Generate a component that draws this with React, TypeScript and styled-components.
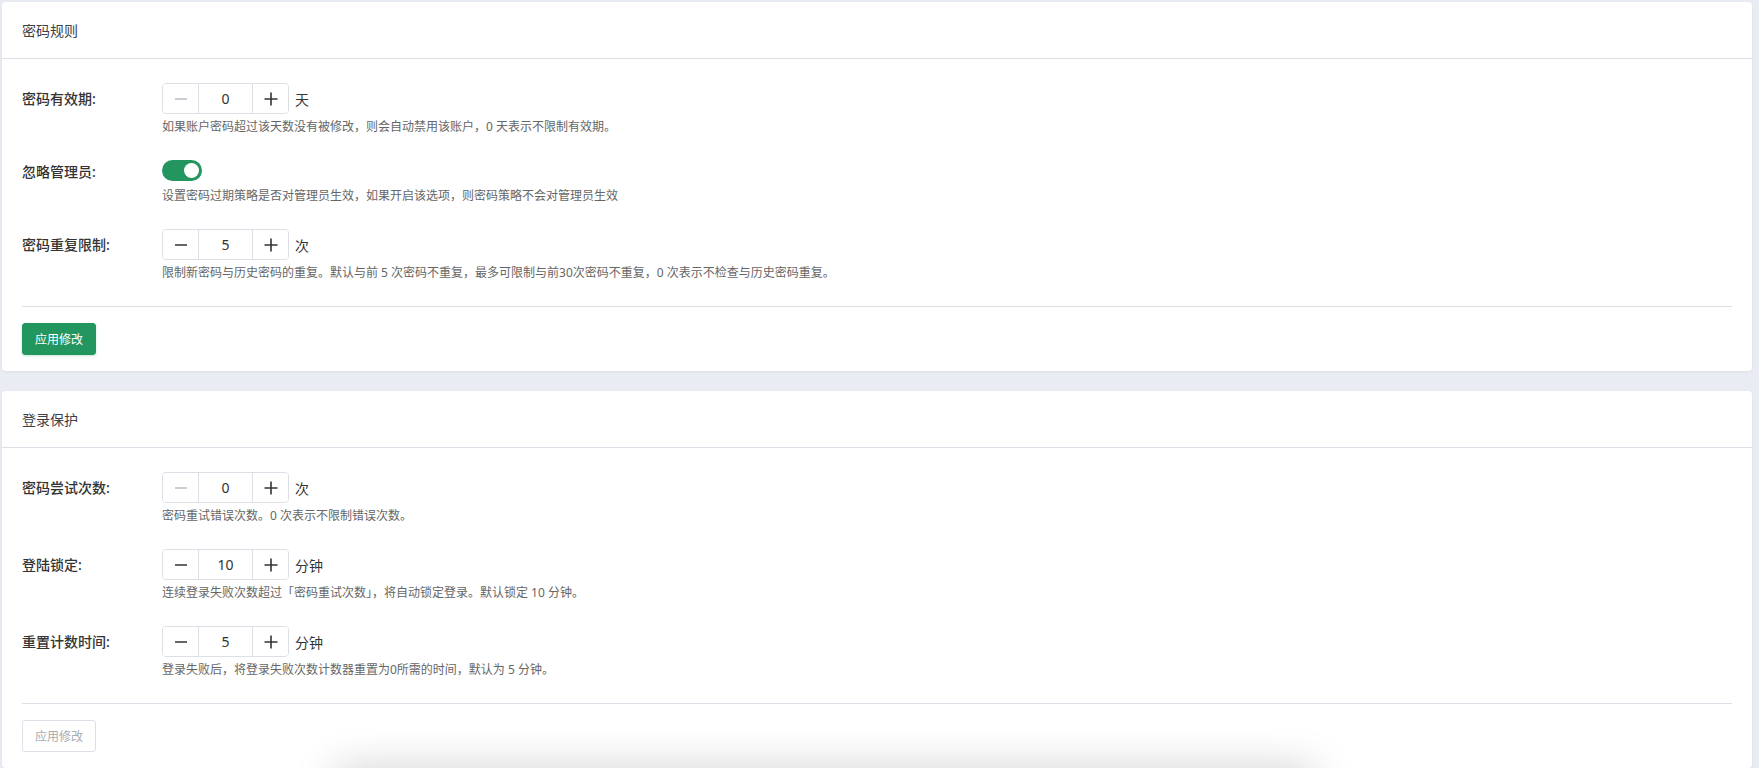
import React, { useState } from 'react';
import styled, { createGlobalStyle } from 'styled-components';

// === Global ===
const GlobalStyle = createGlobalStyle`
  html, body {
    margin: 0;
    padding: 0;
    background: #e9edf3;
    font-family: 'Noto Sans', 'Noto Sans CJK SC', sans-serif;
    color: #333;
  }
  * { box-sizing: border-box; }
`;

// === Styled Components ===
const Page = styled.div`
  display: flex;
  flex-direction: column;
  gap: 20px;
  padding: 2px 7px 0 2px;
  min-height: 768px;
  overflow: hidden;
`;

const Card = styled.section`
  background: #fff;
  border-radius: 4px;
  box-shadow: 0 1px 3px rgba(0, 0, 0, 0.06);
`;

const CardHeader = styled.div`
  height: 57px;
  display: flex;
  align-items: center;
  padding: 0 20px;
  border-bottom: 1px solid #dcdfe6;
  font-size: 14px;
  color: #3c4149;
`;

const CardBody = styled.div`
  padding: 24px 20px 16px 20px;
`;

const Row = styled.div`
  display: flex;
  margin-bottom: 24px;
`;

const Label = styled.div<{ $h: number }>`
  width: 140px;
  flex-shrink: 0;
  height: ${p => p.$h}px;
  line-height: ${p => p.$h}px;
  font-size: 14px;
  font-weight: 500;
  color: #333;
`;

const Control = styled.div`
  display: flex;
  flex-direction: column;
`;

const ControlLine = styled.div<{ $h: number }>`
  display: flex;
  align-items: ${p => (p.$h > 24 ? 'center' : 'flex-start')};
  height: ${p => p.$h}px;
  gap: 6px;
`;

const Help = styled.div`
  margin-top: 4px;
  font-size: 12px;
  line-height: 18px;
  color: #666;
`;

const Stepper = styled.div`
  display: flex;
  height: 31px;
  border: 1px solid #dcdfe6;
  border-radius: 4px;
  overflow: hidden;
`;

const StepButton = styled.button<{ $disabled?: boolean }>`
  width: 35px;
  height: 100%;
  display: flex;
  align-items: center;
  justify-content: center;
  background: #fff;
  border: none;
  padding: 0;
  color: ${p => (p.$disabled ? '#b8bcc4' : '#333')};
  cursor: ${p => (p.$disabled ? 'not-allowed' : 'pointer')};
`;

const StepInput = styled.input`
  width: 55px;
  height: 100%;
  border: none;
  border-left: 1px solid #dcdfe6;
  border-right: 1px solid #dcdfe6;
  text-align: center;
  font-size: 14px;
  font-family: 'Noto Sans', sans-serif;
  color: #333;
  outline: none;
  padding: 0;
`;

const Unit = styled.span`
  font-size: 14px;
  color: #333;
`;

const Toggle = styled.button<{ $on: boolean }>`
  position: relative;
  width: 40px;
  height: 21px;
  border-radius: 11px;
  border: none;
  padding: 0;
  background: ${p => (p.$on ? '#239660' : '#dcdfe6')};
  cursor: pointer;

  &::after {
    content: '';
    position: absolute;
    top: 3px;
    left: ${p => (p.$on ? '22px' : '3px')};
    width: 15px;
    height: 15px;
    border-radius: 50%;
    background: #fff;
  }
`;

const Divider = styled.div`
  height: 1px;
  background: #dcdfe6;
  margin-bottom: 16px;
`;

const ApplyButton = styled.button<{ $disabled?: boolean }>`
  height: 32px;
  padding: 0 12px;
  border-radius: 3px;
  font-size: 12px;
  font-family: 'Noto Sans', 'Noto Sans CJK SC', sans-serif;
  border: 1px solid ${p => (p.$disabled ? '#dcdfe6' : '#239660')};
  background: ${p => (p.$disabled ? '#fff' : '#239660')};
  color: ${p => (p.$disabled ? '#a8abb2' : '#fff')};
  box-shadow: ${p => (p.$disabled ? 'none' : '0 1px 3px rgba(35, 150, 96, 0.25)')};
  cursor: ${p => (p.$disabled ? 'not-allowed' : 'pointer')};
`;

const FloatingShadow = styled.div`
  position: fixed;
  left: 335px;
  width: 980px;
  bottom: -60px;
  height: 60px;
  border-radius: 10px;
  background: #fff;
  box-shadow: 0 0 44px rgba(0, 0, 0, 0.18);
`;

// === Icons ===
const MinusIcon = () => (
  <svg width="14" height="14" viewBox="0 0 14 14">
    <line x1="1" y1="7" x2="13" y2="7" stroke="currentColor" strokeWidth="1.6" />
  </svg>
);

const PlusIcon = () => (
  <svg width="14" height="14" viewBox="0 0 14 14">
    <line x1="0.5" y1="7" x2="13.5" y2="7" stroke="currentColor" strokeWidth="1.6" />
    <line x1="7" y1="0.5" x2="7" y2="13.5" stroke="currentColor" strokeWidth="1.6" />
  </svg>
);

// === Number field ===
interface NumberFieldProps {
  label: string;
  initial: number;
  unit: string;
  help: string;
  min?: number;
}

const NumberField: React.FC<NumberFieldProps> = ({ label, initial, unit, help, min = 0 }) => {
  const [value, setValue] = useState(initial);
  const atMin = value <= min;
  return (
    <Row>
      <Label $h={31}>{label}</Label>
      <Control>
        <ControlLine $h={31}>
          <Stepper>
            <StepButton $disabled={atMin} onClick={() => !atMin && setValue(v => v - 1)}>
              <MinusIcon />
            </StepButton>
            <StepInput readOnly value={value} />
            <StepButton onClick={() => setValue(v => v + 1)}>
              <PlusIcon />
            </StepButton>
          </Stepper>
          <Unit>{unit}</Unit>
        </ControlLine>
        <Help>{help}</Help>
      </Control>
    </Row>
  );
};

const SwitchField: React.FC<{ label: string; help: string }> = ({ label, help }) => {
  const [on, setOn] = useState(true);
  return (
    <Row>
      <Label $h={23}>{label}</Label>
      <Control>
        <ControlLine $h={23}>
          <Toggle $on={on} onClick={() => setOn(o => !o)} />
        </ControlLine>
        <Help>{help}</Help>
      </Control>
    </Row>
  );
};

// === Page ===
export default function App() {
  return (
    <>
      <GlobalStyle />
      <Page>
        <Card>
          <CardHeader>密码规则</CardHeader>
          <CardBody>
            <NumberField
              label="密码有效期:"
              initial={0}
              unit="天"
              help="如果账户密码超过该天数没有被修改，则会自动禁用该账户，0 天表示不限制有效期。"
            />
            <SwitchField
              label="忽略管理员:"
              help="设置密码过期策略是否对管理员生效，如果开启该选项，则密码策略不会对管理员生效"
            />
            <NumberField
              label="密码重复限制:"
              initial={5}
              unit="次"
              help="限制新密码与历史密码的重复。默认与前 5 次密码不重复，最多可限制与前30次密码不重复，0 次表示不检查与历史密码重复。"
            />
            <Divider />
            <ApplyButton>应用修改</ApplyButton>
          </CardBody>
        </Card>

        <Card>
          <CardHeader>登录保护</CardHeader>
          <CardBody>
            <NumberField
              label="密码尝试次数:"
              initial={0}
              unit="次"
              help="密码重试错误次数。0 次表示不限制错误次数。"
            />
            <NumberField
              label="登陆锁定:"
              initial={10}
              unit="分钟"
              help="连续登录失败次数超过「密码重试次数」，将自动锁定登录。默认锁定 10 分钟。"
            />
            <NumberField
              label="重置计数时间:"
              initial={5}
              unit="分钟"
              help="登录失败后，将登录失败次数计数器重置为0所需的时间，默认为 5 分钟。"
            />
            <Divider />
            <ApplyButton $disabled>应用修改</ApplyButton>
          </CardBody>
        </Card>
      </Page>
      <FloatingShadow />
    </>
  );
}
